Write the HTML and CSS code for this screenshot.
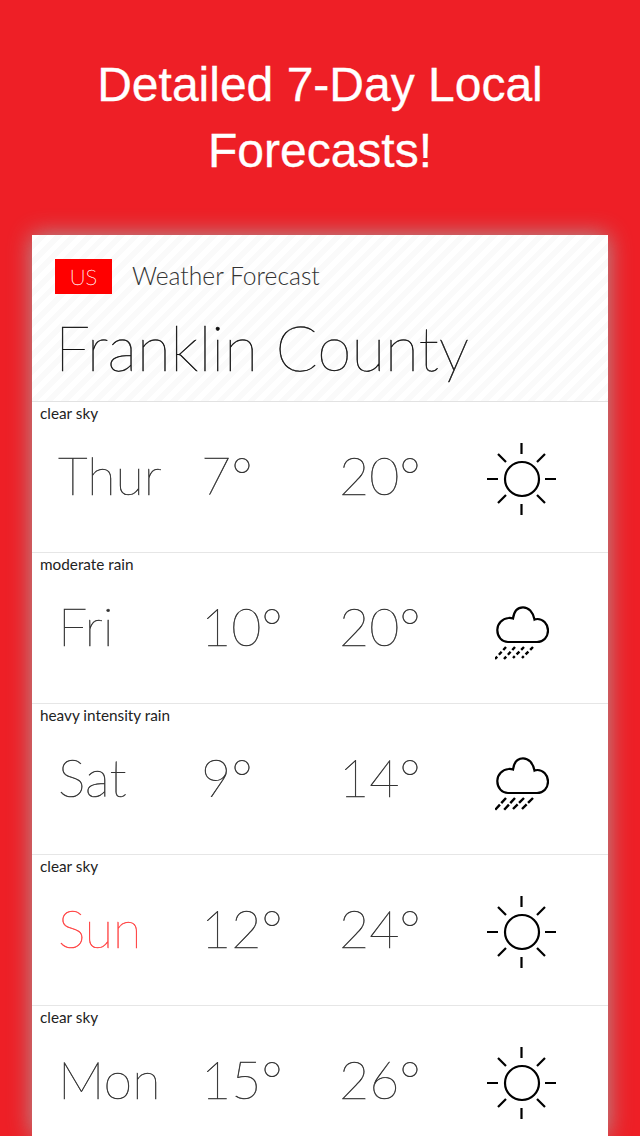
FILE: index.html
```html
<!DOCTYPE html>
<html>
	<head>
		<meta charset="utf-8">
		<title>Weather Forecast</title>
		<link rel="stylesheet" href="styles.css">
	</head>
	<body>
		<svg class="defs" width="0" height="0">
			<symbol id="sun" viewBox="0 0 70 72">
				<circle cx="35" cy="36" r="17" fill="none" stroke="#000" stroke-width="2.2"/>
				<path d="M34.500 0V11M34.500 61V72M0 36H11M58 36H69M11 11L19 19M58 11L50 19M11 60L19 52M58 60L50 52" fill="none" stroke="#000" stroke-width="2.2"/>
			</symbol>
			<symbol id="cloud" viewBox="0 0 54 56">
				<path d="M13 37H42C48.500 37 53 32 53 25.500C53 19 48 14 42.500 14C41.500 14 40.500 14 39.500 14.500C38 7 33.500 2.300 28 2.300C23 2.300 19 6 18 13.500C16.500 13 15 12.800 13.500 13C7.500 13.500 2.300 18.500 2.300 25C2.300 32 7 37 13 37Z" fill="none" stroke="#000" stroke-width="2.2"/>
			</symbol>
			<symbol id="rain" viewBox="0 0 54 56">
				<use href="#cloud" width="54" height="56"/>
				<path d="M11 42L0 54M20 42L9 54M29 42L18 53M38 42L27 53" fill="none" stroke="#000" stroke-width="2.4" stroke-dasharray="4 2.500"/>
			</symbol>
			<symbol id="heavy-rain" viewBox="0 0 54 56">
				<use href="#cloud" width="54" height="56"/>
				<path d="M11 42L0 54M20 42L9 54M29 42L18 53M38 42L27 53" fill="none" stroke="#000" stroke-width="2.4" stroke-dasharray="7 2"/>
			</symbol>
		</svg>

		<h1 class="title">Detailed 7-Day Local Forecasts!</h1>

		<div class="card">
			<div class="head">
				<div class="head-top">
					<span class="tag">US</span>
					<span class="app-name">Weather Forecast</span>
				</div>
				<div class="county">Franklin County</div>
			</div>

			<div class="row">
				<div class="desc">clear sky</div>
				<div class="cols">
					<span class="day">Thur</span>
					<span class="low">7°</span>
					<span class="high">20°</span>
					<svg class="icon-sun"><use href="#sun"/></svg>
				</div>
			</div>
			<div class="row">
				<div class="desc">moderate rain</div>
				<div class="cols">
					<span class="day">Fri</span>
					<span class="low">10°</span>
					<span class="high">20°</span>
					<svg class="icon-rain"><use href="#rain"/></svg>
				</div>
			</div>
			<div class="row">
				<div class="desc">heavy intensity rain</div>
				<div class="cols">
					<span class="day">Sat</span>
					<span class="low">9°</span>
					<span class="high">14°</span>
					<svg class="icon-rain"><use href="#heavy-rain"/></svg>
				</div>
			</div>
			<div class="row">
				<div class="desc">clear sky</div>
				<div class="cols">
					<span class="day sunday">Sun</span>
					<span class="low">12°</span>
					<span class="high">24°</span>
					<svg class="icon-sun"><use href="#sun"/></svg>
				</div>
			</div>
			<div class="row">
				<div class="desc">clear sky</div>
				<div class="cols">
					<span class="day">Mon</span>
					<span class="low">15°</span>
					<span class="high">26°</span>
					<svg class="icon-sun"><use href="#sun"/></svg>
				</div>
			</div>
		</div>
	</body>
</html>
```

FILE: styles.css
```css
*{margin:0;padding:0;box-sizing:border-box}
html,body{height:1136px;overflow:hidden}
body{
	background:#ee1f26;
	font-family:"Lato","Liberation Sans",sans-serif;
	color:#222;
}
.defs{position:absolute}
.title{
	height:235px;
	padding:52px 60px 0;
	font-family:"Liberation Sans",Arial,sans-serif;
	font-size:48px;
	font-weight:400;
	line-height:66px;
	text-align:center;
	color:#fff;
	-webkit-text-stroke:0.3px #fff;
}
.card{
	width:576px;
	margin-left:32px;
	height:901px;
	background:#fff;
	box-shadow:0 0 22px rgba(165,165,165,0.9);
}
.head{
	height:167px;
	padding:24px 0 0 23px;
	border-bottom:1px solid #e2e2e2;
	background:repeating-linear-gradient(135deg,#fff 0,#fff 5.5px,#fafafa 5.5px,#fafafa 11px);
}
.head-top{display:flex;align-items:center;height:35px}
.tag{
	width:57px;
	height:35px;
	background:#f00;
	color:#fff;
	font-size:22px;
	font-weight:200;
	line-height:36px;
	text-align:center;
	-webkit-text-stroke:0.3px #fff;
}
.app-name{
	margin-left:20px;
	margin-top:-3px;
	font-size:24.6px;
	font-weight:300;
	color:#333;
}
.county{
	margin:13px 0 0 0;
	font-size:62px;
	font-weight:200;
	line-height:80px;
	color:#111;
	white-space:nowrap;
	-webkit-text-stroke:0.5px #111;
}
.row{height:151px;border-bottom:1px solid #e6e6e6}
.desc{
	padding:1px 0 0 8px;
	font-size:15.3px;
	line-height:20px;
	color:#222;
}
.cols{
	display:flex;
	align-items:center;
	height:111px;
	padding-left:26px;
	font-size:52px;
	font-weight:200;
	color:#333;
	-webkit-text-stroke:0.5px #333;
}
.cols span{margin-top:-8px}
.day{width:143px}
.sunday{color:#f44;-webkit-text-stroke:0.5px #f44}
.low{width:138px}
.high{width:148px}
.icon-sun{width:70px;height:72px;flex:none}
.icon-rain{width:54px;height:56px;flex:none;margin:7px 0 0 8px}
```
